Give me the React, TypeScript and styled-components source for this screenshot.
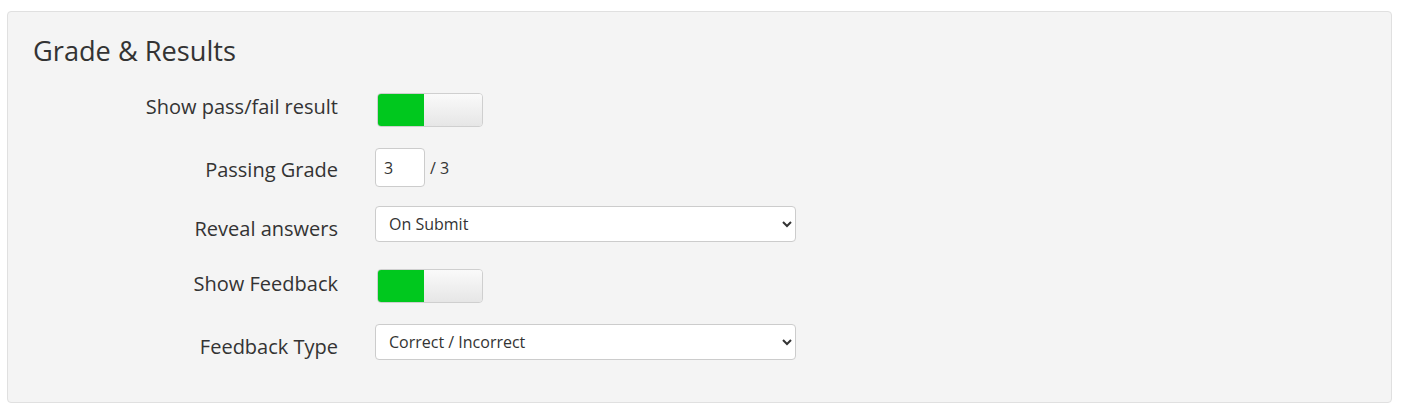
import styled, { createGlobalStyle } from "styled-components";

const Global = createGlobalStyle`
  body {
    margin: 0;
    background: #fff;
    font-family: "Open Sans", "Liberation Sans", sans-serif;
    color: #333;
  }
`;

const Page = styled.div`
  padding: 11px 13px 8px 7px;
`;

const Panel = styled.section`
  background: #f4f4f4;
  border: 1px solid #e0e0e0;
  border-radius: 4px;
  padding: 20px 26px 42px 25px;
`;

const Title = styled.h2`
  margin: 0 0 23px;
  font-size: 27.2px;
  font-weight: 400;
  line-height: 38px;
  color: #333;
`;

const Form = styled.div`
  display: flex;
  flex-direction: column;
`;

const Row = styled.div<{ $gap: number }>`
  display: grid;
  grid-template-columns: 305px 1fr;
  column-gap: 37px;
  align-items: center;
  margin-top: ${(p) => p.$gap}px;
`;

const Label = styled.label<{ $drop?: number }>`
  text-align: right;
  font-size: 20px;
  color: #333;
  position: relative;
  top: ${(p) => p.$drop ?? 0}px;
`;

const Controls = styled.div`
  display: flex;
  align-items: center;
  gap: 5px;
`;

const Toggle = styled.div`
  display: flex;
  width: 106px;
  height: 34px;
  margin-left: 2px;
  border: 1px solid #cfcfcf;
  border-radius: 4px;
  overflow: hidden;
  box-sizing: border-box;
`;

const ToggleOn = styled.span`
  width: 46px;
  background: #00c81e;
`;

const ToggleOff = styled.span`
  flex: 1;
  background: linear-gradient(#fafafa, #e6e6e6);
`;

const NumberInput = styled.input`
  width: 50px;
  height: 39px;
  box-sizing: border-box;
  border: 1px solid #cccccc;
  border-radius: 4px;
  background: #fff;
  padding: 0 8px;
  font-family: inherit;
  font-size: 16px;
  color: #333;
`;

const Suffix = styled.span`
  font-size: 16px;
  color: #333;
`;

const Select = styled.select`
  width: 421px;
  height: 36px;
  box-sizing: border-box;
  border: 1px solid #cccccc;
  border-radius: 4px;
  background: #fff;
  padding: 0 9px;
  font-family: inherit;
  font-size: 16px;
  color: #333;
`;

export default function App() {
  return (
    <>
      <Global />
      <Page>
        <Panel>
          <Title>Grade &amp; Results</Title>
          <Form>
            <Row $gap={0}>
              <Label $drop={-4}>Show pass/fail result</Label>
              <Controls>
                <Toggle>
                  <ToggleOn />
                  <ToggleOff />
                </Toggle>
              </Controls>
            </Row>
            <Row $gap={21}>
              <Label $drop={2}>Passing Grade</Label>
              <Controls>
                <NumberInput defaultValue="3" />
                <Suffix>/ 3</Suffix>
              </Controls>
            </Row>
            <Row $gap={19}>
              <Label $drop={4}>Reveal answers</Label>
              <Controls>
                <Select defaultValue="submit">
                  <option value="submit">On Submit</option>
                  <option value="never">Never</option>
                </Select>
              </Controls>
            </Row>
            <Row $gap={27}>
              <Label $drop={-3}>Show Feedback</Label>
              <Controls>
                <Toggle>
                  <ToggleOn />
                  <ToggleOff />
                </Toggle>
              </Controls>
            </Row>
            <Row $gap={21}>
              <Label $drop={4}>Feedback Type</Label>
              <Controls>
                <Select defaultValue="ci">
                  <option value="ci">Correct / Incorrect</option>
                  <option value="full">Full</option>
                </Select>
              </Controls>
            </Row>
          </Form>
        </Panel>
      </Page>
    </>
  );
}
